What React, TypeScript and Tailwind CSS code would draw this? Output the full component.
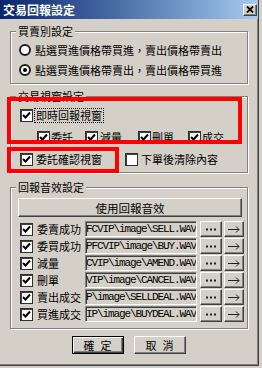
import React from "react";

const raised =
	"border border-t-white border-l-white border-r-[#404040] border-b-[#404040] shadow-[inset_-1px_-1px_0_#808080] bg-[#d4d0c8]";
const sunken =
	"border border-t-[#808080] border-l-[#808080] border-r-white border-b-white shadow-[inset_1px_1px_0_#404040]";
const group =
	"border border-[#808080] shadow-[inset_1px_1px_0_white,1px_1px_0_white] px-0";
const legend = "ml-[5px] px-[2px] leading-[14px] bg-[#d4d0c8]";

function Check({ on = true }: { on?: boolean }) {
	return (
		<span className="w-[13px] h-[13px] shrink-0 bg-white flex items-center justify-center border border-[#303030] shadow-[inset_1px_1px_0_#404040]">
			{on && (
				<svg width="9" height="9" viewBox="0 0 9 9">
					<path d="M1 4 L3.5 6.5 L8 1.5" fill="none" stroke="black" strokeWidth="2" />
				</svg>
			)}
		</span>
	);
}

function Radio({ on = false }: { on?: boolean }) {
	return (
		<span className="w-[12px] h-[12px] shrink-0 rounded-full bg-white border-2 border-[#202020] flex items-center justify-center">
			{on && <span className="w-[4px] h-[4px] rounded-full bg-black" />}
		</span>
	);
}

const sounds = [
	["委賣成功", "FCVIP\\image\\SELL.WAV"],
	["委買成功", "PFCVIP\\image\\BUY.WAV"],
	["減量", "CVIP\\image\\AMEND.WAV"],
	["刪單", "VIP\\image\\CANCEL.WAV"],
	["賣出成交", "P\\image\\SELLDEAL.WAV"],
	["買進成交", "IP\\image\\BUYDEAL.WAV"],
];

export default function App() {
	return (
		<div className="relative w-[262px] h-[368px] overflow-hidden bg-[#d4d0c8] text-black text-[11px] leading-[14px] font-['Noto_Sans_CJK_TC',sans-serif]">
			<div className="w-[259px] h-[366px] flex flex-col border-r border-b border-[#404040] shadow-[inset_-1px_-1px_0_#808080]">
				{/* title bar */}
				<div className="h-[19px] flex items-center justify-between bg-linear-to-r from-[#0a246a] to-[#a6caf0]">
					<span className="ml-[3px] text-white font-bold text-[12px]">交易回報設定</span>
					<span className={`w-[14px] h-[12px] mr-[1px] flex items-center justify-center ${raised}`}>
						<svg width="8" height="7" viewBox="0 0 8 7">
							<path d="M1 0.5 L7 6.5 M7 0.5 L1 6.5" stroke="black" strokeWidth="1.8" />
						</svg>
					</span>
				</div>

				<div className="px-[10px]">
					{/* group 1 */}
					<fieldset className={`${group} mt-[5px] pt-[4px] pb-[5px]`}>
						<legend className={legend}>買賣別設定</legend>
						<div className="flex flex-col gap-[4px] ml-[8px]">
							<div className="h-[16px] flex items-center gap-[4px]">
								<Radio />
								<span>點選買進價格帶買進，賣出價格帶賣出</span>
							</div>
							<div className="h-[16px] flex items-center gap-[4px]">
								<Radio on />
								<span>點選買進價格帶賣出，賣出價格帶買進</span>
							</div>
						</div>
					</fieldset>

					{/* group 2 */}
					<fieldset className={`${group} mt-[5px] pt-[4px] pb-[5px]`}>
						<legend className={legend}>交易視窗設定</legend>
						<div className="h-[16px] flex items-center ml-[9px]">
							<Check />
							<span className="ml-[1px] px-[1px] border border-dotted border-black leading-[13px]">即時回報視窗</span>
						</div>
						<div className="h-[16px] mt-[6px] flex items-center ml-[26px]">
							<div className="w-[48px] flex items-center gap-[1px]">
								<Check />
								<span>委託</span>
							</div>
							<div className="w-[53px] flex items-center gap-[2px]">
								<Check />
								<span>減量</span>
							</div>
							<div className="w-[50px] flex items-center gap-[1px]">
								<Check />
								<span>刪單</span>
							</div>
							<div className="flex items-center gap-[1px]">
								<Check />
								<span>成交</span>
							</div>
						</div>
						<div className="h-[16px] mt-[6px] flex items-center ml-[9px]">
							<div className="w-[105px] flex items-center gap-[3px]">
								<Check />
								<span>委託確認視窗</span>
							</div>
							<div className="flex items-center gap-[3px]">
								<Check on={false} />
								<span>下單後清除內容</span>
							</div>
						</div>
					</fieldset>

					{/* group 3 */}
					<fieldset className={`${group} mt-[7px] pt-[4px] pb-[6px]`}>
						<legend className={legend}>回報音效設定</legend>
						<div className={`ml-[7px] w-[224px] h-[19px] flex items-center justify-center text-[11.5px] ${raised}`}>
							使用回報音效
						</div>
						<div className="mt-[4px] flex flex-col gap-[1px]">
							{sounds.map(([label, path]) => (
								<div key={label} className="h-[16px] flex items-center ml-[9px]">
									<Check />
									<span className="ml-[4px] w-[45px] whitespace-nowrap">{label}</span>
									<span
										className={`ml-[3px] w-[112px] h-[16px] flex items-center justify-end overflow-hidden whitespace-nowrap font-['Liberation_Mono',monospace] text-[11px] tracking-[-1.1px] ${sunken}`}
									>
										{path}
									</span>
									<span className={`ml-[3px] w-[22px] h-[16px] flex items-center justify-center ${raised}`}>
										<svg width="10" height="3" viewBox="0 0 10 3">
											<rect x="0" y="0.5" width="2" height="2" fill="#202020" />
											<rect x="4" y="0.5" width="2" height="2" fill="#202020" />
											<rect x="8" y="0.5" width="2" height="2" fill="#202020" />
										</svg>
									</span>
									<span className={`ml-[2px] w-[20px] h-[16px] flex items-center justify-center ${raised}`}>
										<svg width="12" height="7" viewBox="0 0 12 7">
											<path d="M0 3.5 H11 M8 0.5 L11 3.5 L8 6.5" fill="none" stroke="#202020" strokeWidth="1" />
										</svg>
									</span>
								</div>
							))}
						</div>
					</fieldset>

					{/* buttons */}
					<div className="mt-[7px] flex justify-center gap-[10px] pr-[1px]">
						<span className="w-[52px] h-[18px] flex items-center justify-center bg-[#d4d0c8] border border-black shadow-[inset_1px_1px_0_white,inset_-1px_-1px_0_#404040,inset_-2px_-2px_0_#808080] tracking-[6px] pl-[6px]">
							確定
						</span>
						<span className={`w-[52px] h-[18px] flex items-center justify-center tracking-[6px] pl-[6px] ${raised}`}>
							取消
						</span>
					</div>
				</div>
			</div>

			{/* red highlight marks */}
			<div className="absolute left-[7px] top-[97px] w-[235px] h-[47px] border-4 border-[#ff0000]" />
			<div className="absolute left-[7px] top-[147px] w-[112px] h-[26px] border-4 border-[#ff0000]" />
		</div>
	);
}
